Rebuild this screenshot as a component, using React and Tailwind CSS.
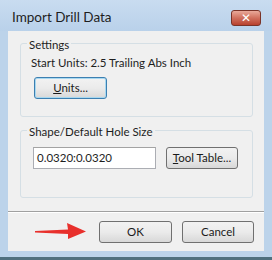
import React from 'react';

function Btn({ children, className = '' }) {
    return (
        <div className={`flex items-center justify-center rounded-[3px] border border-[#707070] bg-gradient-to-b from-[#f2f2f2] via-[#ebebeb] to-[#d8d8d8] text-[11.5px] text-[#1a1a1a] ${className}`}>
            {children}
        </div>
    );
}

export default function App() {
    const font = { fontFamily: 'Lato, "Noto Sans", sans-serif' };
    return (
        <div className="w-[272px] h-[260px] bg-[#bcd3ea] flex flex-col overflow-hidden" style={font}>
            {/* title bar */}
            <div className="h-[31px] flex items-start justify-between pl-[12px] pr-[11px] bg-gradient-to-b from-[#c9dcf0] to-[#b9d1ea]">
                <span className="mt-[10px] text-[13.5px] leading-[14px] text-[#1e1e1e]">Import Drill Data</span>
                <div className="mt-[10px] w-[30px] h-[16px] rounded-[3px] border border-[#7a3328] bg-gradient-to-b from-[#e9a99a] via-[#d0705e] to-[#b8402d] flex items-center justify-center">
                    <span className="text-white text-[12px] font-bold leading-none" style={{ fontFamily: '"DejaVu Sans", sans-serif' }}>✕</span>
                </div>
            </div>

            {/* client area */}
            <div className="mx-[8px] h-[220px] bg-[#f0f0f0] flex flex-col">
                {/* Settings group */}
                <div className="ml-[12px] mt-[12px] w-[233px] h-[74px] border border-[#d5dfe5] rounded-[3px] flex flex-col items-start">
                    <span className="-mt-[6px] ml-[6px] px-[2px] bg-[#f0f0f0] text-[11.5px] leading-[14px] text-[#1e1e1e]">Settings</span>
                    <span className="mt-[4px] ml-[10px] text-[11.5px] leading-[14px] text-[#1e1e1e]">Start Units: 2.5 Trailing Abs Inch</span>
                    <Btn className="mt-[7px] ml-[13px] w-[73px] h-[22px] !border-[#3c7fb1] shadow-[0_0_0_1px_#a8d8f0_inset]">
                        <span><span className="underline">U</span>nits...</span>
                    </Btn>
                </div>

                {/* Shape group */}
                <div className="ml-[12px] mt-[13px] w-[233px] h-[68px] border border-[#d5dfe5] rounded-[3px] flex flex-col items-start">
                    <span className="-mt-[6px] ml-[6px] px-[2px] bg-[#f0f0f0] text-[11.5px] leading-[14px] text-[#1e1e1e]">Shape/Default Hole Size</span>
                    <div className="mt-[8px] ml-[12px] flex items-center gap-[10px]">
                        <div className="w-[123px] h-[22px] border border-[#abadb3] border-t-[#a3a3a3] bg-white flex items-center pl-[3px] text-[11.5px] text-[#1e1e1e]">
                            0.0320:0.0320
                        </div>
                        <Btn className="w-[72px] h-[22px]">
                            <span><span className="underline">T</span>ool Table...</span>
                        </Btn>
                    </div>
                </div>

                {/* separator */}
                <div className="mt-[13px] h-[1px] bg-[#a0a0a0]" />
                <div className="h-[1px] bg-white" />

                {/* bottom buttons */}
                <div className="mt-[8px] flex items-center">
                    <svg width="60" height="20" viewBox="0 0 60 20" className="ml-[26px] mr-[5px]">
                        <polygon points="1,9 34,7.5 33,1 52,9.5 34,17 34,12 1,10.5" fill="#e8302c" />
                    </svg>
                    <Btn className="w-[73px] h-[22px]">OK</Btn>
                    <Btn className="ml-[10px] w-[72px] h-[22px]">Cancel</Btn>
                </div>
            </div>

            {/* bottom frame */}
            <div className="h-[6px]" />
            <div className="flex-1 bg-[#50707e]" />
        </div>
    );
}
